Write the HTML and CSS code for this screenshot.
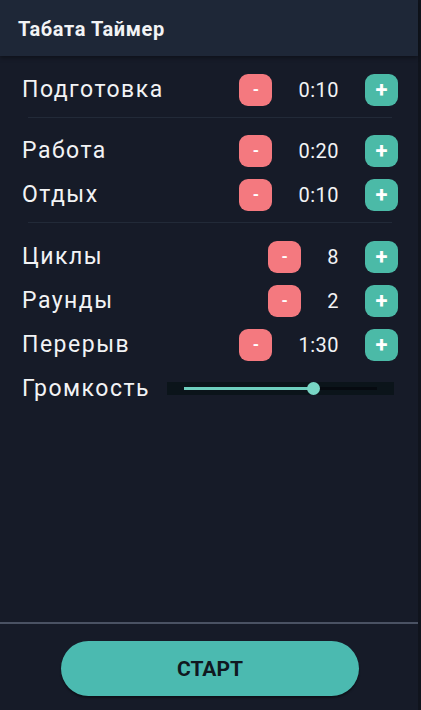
FILE: index.html
```html
<!DOCTYPE html>
<html lang="ru">
<head>
    <meta charset="UTF-8">
    <meta name="viewport" content="width=device-width, initial-scale=1.0">
    <title>Табата Таймер</title>
    <link rel="stylesheet" href="styles.css">
</head>
<body>

<div class="app">
    <header class="topbar">Табата Таймер</header>

    <main class="settings">
        <div class="row">
            <span class="label">Подготовка</span>
            <button class="btn minus">-</button>
            <span class="value">0:10</span>
            <button class="btn plus">+</button>
        </div>

        <hr class="divider">

        <div class="row">
            <span class="label">Работа</span>
            <button class="btn minus">-</button>
            <span class="value">0:20</span>
            <button class="btn plus">+</button>
        </div>
        <div class="row">
            <span class="label">Отдых</span>
            <button class="btn minus">-</button>
            <span class="value">0:10</span>
            <button class="btn plus">+</button>
        </div>

        <hr class="divider lower">

        <div class="row">
            <span class="label">Циклы</span>
            <button class="btn minus">-</button>
            <span class="value">8</span>
            <button class="btn plus">+</button>
        </div>
        <div class="row">
            <span class="label">Раунды</span>
            <button class="btn minus">-</button>
            <span class="value">2</span>
            <button class="btn plus">+</button>
        </div>
        <div class="row">
            <span class="label">Перерыв</span>
            <button class="btn minus">-</button>
            <span class="value">1:30</span>
            <button class="btn plus">+</button>
        </div>

        <div class="row volume">
            <span class="label">Громкость</span>
            <div class="slider">
                <div class="track">
                    <div class="fill" style="width: 67%;"></div>
                    <div class="thumb" style="left: 67%;"></div>
                </div>
            </div>
        </div>
    </main>

    <footer class="bottom">
        <button class="start">СТАРТ</button>
    </footer>
</div>

</body>
</html>
```

FILE: styles.css
```css
* {
    box-sizing: border-box;
}
html, body {
    margin: 0;
    height: 100%;
}
body {
    background: #161b28;
    font-family: Roboto, "Liberation Sans", sans-serif;
    color: #f2f3f5;
}
.app {
    display: flex;
    flex-direction: column;
    height: 710px;
    border-right: 3px solid #10141d;
}
.topbar {
    height: 56px;
    padding: 19px 18px 0;
    background: #1e2737;
    font-size: 20px;
    line-height: 20px;
    font-weight: bold;
    letter-spacing: 0.6px;
    box-shadow: 0 2px 4px rgba(0, 0, 0, 0.35);
}
.settings {
    flex: 1;
    padding: 17px 20px 0 22px;
}
.row {
    display: flex;
    align-items: center;
    height: 33px;
    margin-bottom: 11px;
}
.label {
    flex: 1;
    font-size: 23px;
    letter-spacing: 1.5px;
}
.btn {
    width: 33px;
    height: 32px;
    border: none;
    border-radius: 9px;
    color: #fff;
    font-family: inherit;
    font-weight: bold;
    padding: 0;
    cursor: pointer;
}
.minus {
    background: #f4797f;
    font-size: 16px;
}
.plus {
    background: #4bbaa7;
    font-size: 22px;
    line-height: 1;
}
.value {
    margin: 0 26px;
    font-size: 20px;
    letter-spacing: 0.5px;
}
.divider {
    border: none;
    border-top: 1px solid #222a38;
    margin: 1px 6px 16px 6px;
}
.divider.lower {
    margin: 2px 6px 17px 6px;
}
.volume {
    margin-top: 6px;
}
.slider {
    width: 227px;
    height: 13px;
    margin-right: 4px;
    background: #0b141a;
    padding: 0 17px;
    display: flex;
    align-items: center;
}
.track {
    position: relative;
    width: 100%;
    height: 3px;
    background: #060a10;
}
.fill {
    height: 3px;
    background: #6fd0bf;
}
.thumb {
    position: absolute;
    top: 50%;
    width: 13px;
    height: 13px;
    margin: -6.5px 0 0 -6.5px;
    border-radius: 50%;
    background: #78d6c5;
}
.bottom {
    border-top: 2px solid #4a5263;
    padding: 17px 0 14px;
    display: flex;
    justify-content: center;
}
.start {
    width: 298px;
    height: 55px;
    border: none;
    border-radius: 28px;
    background: #4bbab0;
    color: #101820;
    font-family: inherit;
    font-size: 21px;
    font-weight: bold;
    box-shadow: 0 2px 2px rgba(0, 0, 0, 0.4);
    margin-left: 2px;
}
```
